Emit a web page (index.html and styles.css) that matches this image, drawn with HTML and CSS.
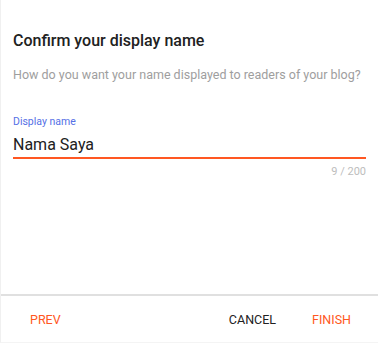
FILE: index.html
```html
<!DOCTYPE html>
<html lang="en">
<head>
    <meta charset="UTF-8">
    <meta name="viewport" content="width=device-width, initial-scale=1.0">
    <title>Confirm your display name</title>
    <link rel="stylesheet" href="styles.css">
</head>
<body>
    <div class="dialog">
        <div class="content">
            <h1>Confirm your display name</h1>
            <p class="hint">How do you want your name displayed to readers of your blog?</p>

            <div class="field">
                <label for="display-name">Display name</label>
                <input type="text" id="display-name" value="Nama Saya" maxlength="200">
                <div class="counter">9 / 200</div>
            </div>
        </div>

        <div class="actions">
            <button class="btn accent">Prev</button>
            <div class="right">
                <button class="btn">Cancel</button>
                <button class="btn accent">Finish</button>
            </div>
        </div>
    </div>
</body>
</html>
```

FILE: styles.css
```css
body {
    margin: 0;
    font-family: Roboto, "Liberation Sans", Arial, sans-serif;
    background-color: #fff;
    color: #212121;
}
.dialog {
    height: 343px;
    box-sizing: border-box;
    display: flex;
    flex-direction: column;
    border-left: 1px solid #f0f0f0;
    border-bottom: 1px solid #f4f4f4;
}
.content {
    flex: 1;
    padding: 31px 12px 0 12px;
}
h1 {
    margin: 0;
    font-size: 16px;
    line-height: 20px;
    font-weight: 500;
    color: #212121;
}
.hint {
    margin: 15px 0 0 0;
    font-size: 12.5px;
    line-height: 18px;
    color: #9e9e9e;
    white-space: nowrap;
}
.field {
    margin-top: 31px;
}
label {
    display: block;
    font-size: 10.5px;
    line-height: 14px;
    color: #5570e6;
}
input[type="text"] {
    display: block;
    width: 100%;
    box-sizing: border-box;
    margin-top: 6px;
    padding: 0 0 2px 0;
    border: none;
    border-bottom: 2px solid #ff5722;
    outline: none;
    font-family: inherit;
    font-size: 16px;
    line-height: 20px;
    color: #212121;
    background: transparent;
}
.counter {
    margin-top: 6px;
    text-align: right;
    font-size: 11px;
    line-height: 14px;
    color: #bdbdbd;
}
.actions {
    height: 46px;
    border-top: 2px solid #e0e0e0;
    display: flex;
    align-items: center;
    justify-content: space-between;
    padding: 0 11px 0 13px;
}
.right {
    display: flex;
    gap: 4px;
}
.btn {
    background: none;
    border: none;
    padding: 8px 16px;
    font-family: inherit;
    font-size: 12.5px;
    font-weight: 400;
    text-transform: uppercase;
    color: #212121;
    cursor: pointer;
}
.btn.accent {
    color: #ff5722;
}
```
